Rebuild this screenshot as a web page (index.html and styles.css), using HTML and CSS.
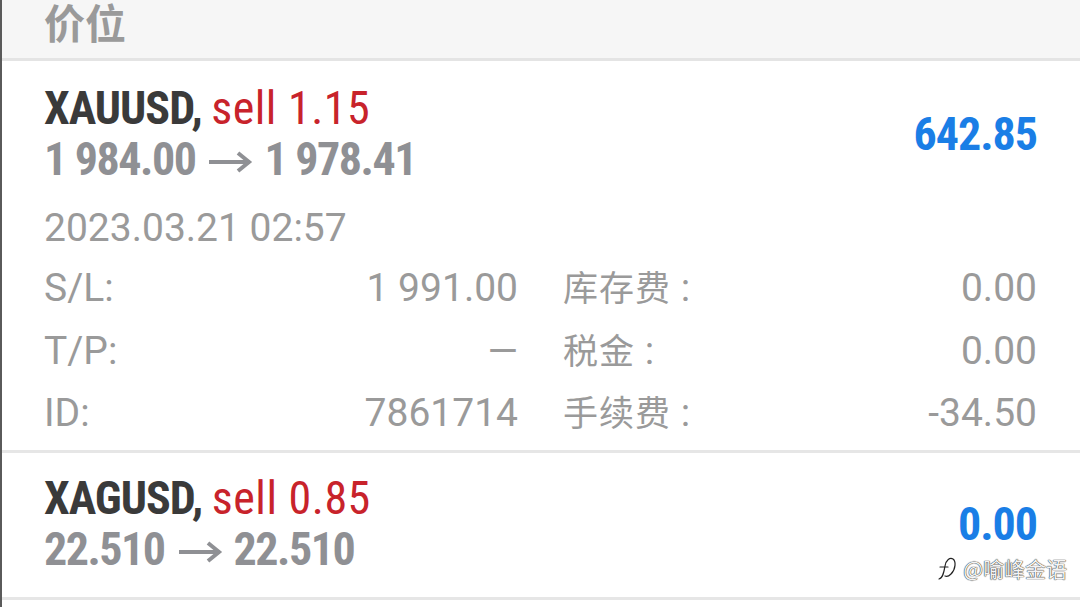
FILE: index.html
```html
<!DOCTYPE html>
<html lang="zh">
	<head>
		<meta charset="utf-8">
		<title>持仓</title>
		<link rel="stylesheet" href="styles.css">
	</head>
	<body>
		<main class="screen">

			<!--
				section header
			-->

			<header class="group-head">价位</header>

			<!--
				first position, expanded
			-->

			<section class="position">
				<div class="pos-top">
					<div class="pos-title">
						<div class="symbol"><b>XAUUSD,</b> <span class="side">sell 1.15</span></div>
						<div class="prices">1 984.00<svg class="arrow" width="46" height="24" viewBox="0 0 46 24"><path d="M2 12 H42 M31 3 L42 12 L31 21" fill="none" stroke="#8f9094" stroke-width="4"/></svg>1 978.41</div>
					</div>
					<div class="profit">642.85</div>
				</div>

				<div class="opened">2023.03.21 02:57</div>

				<div class="details">
					<div class="pair"><span>S/L:</span><span>1 991.00</span></div>
					<div class="pair"><span><span class="cjk">库存费</span> :</span><span>0.00</span></div>
					<div class="pair"><span>T/P:</span><span>—</span></div>
					<div class="pair"><span><span class="cjk">税金</span> :</span><span>0.00</span></div>
					<div class="pair"><span>ID:</span><span>7861714</span></div>
					<div class="pair"><span><span class="cjk">手续费</span> :</span><span>-34.50</span></div>
				</div>
			</section>

			<!--
				second position, collapsed
			-->

			<section class="position short">
				<div class="pos-top">
					<div class="pos-title">
						<div class="symbol"><b>XAGUSD,</b> <span class="side">sell 0.85</span></div>
						<div class="prices">22.510<svg class="arrow" width="46" height="24" viewBox="0 0 46 24"><path d="M2 12 H42 M31 3 L42 12 L31 21" fill="none" stroke="#8f9094" stroke-width="4"/></svg>22.510</div>
					</div>
					<div class="profit">0.00</div>
				</div>
			</section>

		</main>

		<div class="mark">
			<svg class="mark-logo" width="22" height="26" viewBox="0 0 22 26">
				<path d="M3 24 C7 23 8 17 9 11 C10 5 14 2 17 4 C20 6 20 14 15 19 C13 21 11 22 9 21 M4 12 H12" fill="none" stroke="#fff" stroke-width="3.4" stroke-linecap="round"/>
				<path d="M3 24 C7 23 8 17 9 11 C10 5 14 2 17 4 C20 6 20 14 15 19 C13 21 11 22 9 21 M4 12 H12" fill="none" stroke="#222" stroke-width="1.2" stroke-linecap="round"/>
			</svg>
			<span>@喻峰金语</span>
		</div>
	</body>
</html>
```

FILE: styles.css
```css
/*
	page reset and phone canvas
*/

body {
	margin: 0;
	background-color: #ffffff;
	font-family: Roboto, "Noto Sans CJK SC", sans-serif;
	overflow: hidden;
}

.screen {
	width: 1080px;
	height: 607px;
	border-left: 2px solid #5a5a5a;
	box-sizing: border-box;
	overflow: hidden;
}

/*
	grey group header
*/

.group-head {
	height: 58px;
	padding: 0 42px;
	background-color: #f6f6f6;
	border-bottom: 3px solid #e4e4e4;
	color: #9a9a9a;
	font-family: "Noto Sans CJK SC", sans-serif;
	font-size: 41px;
	font-weight: bold;
	line-height: 43px;
}

/*
	one trade row
*/

.position {
	padding: 22px 43px 0 42px;
	height: 392px;
	box-sizing: border-box;
	border-bottom: 3px solid #e6e6e6;
}

.position.short {
	height: 147px;
	padding-top: 20px;
}

.pos-top {
	display: flex;
	align-items: center;
	justify-content: space-between;
}

.symbol,
.prices,
.profit {
	font-family: "Liberation Sans Narrow", "Roboto Condensed", Roboto, sans-serif;
	font-size: 46px;
	line-height: 51px;
	letter-spacing: -1px;
	white-space: nowrap;
}

.symbol b {
	color: #3a3a3a;
}

.side {
	color: #c8232b;
	letter-spacing: 0.5px;
}

.prices {
	color: #8f9094;
	font-weight: bold;
	letter-spacing: -1.5px;
}

.arrow {
	margin: 0 11px 0 12px;
	vertical-align: 1px;
}

.profit {
	color: #1a7ee6;
	font-weight: bold;
}

/*
	open time and the details grid
*/

.opened {
	margin-top: 13px;
	color: #9a9a9a;
	font-size: 39px;
	line-height: 60px;
}

.details {
	display: grid;
	grid-template-columns: 1fr 1fr;
	column-gap: 45px;
	color: #9a9a9a;
	font-size: 39px;
	line-height: 60.5px;
}

.pair {
	display: flex;
	justify-content: space-between;
}

.cjk {
	font-size: 35px;
	letter-spacing: 1px;
}

/*
	watermark
*/

.mark {
	position: absolute;
	right: 13px;
	top: 553px;
	display: flex;
	align-items: center;
	gap: 5px;
	color: #f4f4f4;
	font-family: "Noto Sans CJK SC", sans-serif;
	font-size: 21px;
	text-shadow: 0 0 1px #222, 0 0 1px #222;
}
```
